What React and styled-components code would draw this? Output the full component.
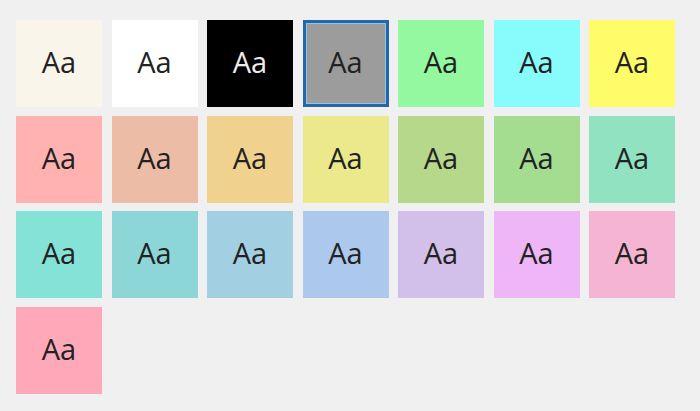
import React from 'react'
import styled, {createGlobalStyle} from 'styled-components'

const GlobalStyle = createGlobalStyle`
	html, body {
		margin: 0;
		padding: 0;
		background: #f0f0f0;
	}
	body {
		font-family: 'Open Sans', 'Noto Sans', sans-serif;
	}
`

const Palette = styled.div`
	display: grid;
	grid-template-columns: repeat(7, 86px);
	grid-auto-rows: 87px;
	column-gap: 9.5px;
	row-gap: 8.7px;
	padding: 20px 0 0 16px;
`

const Swatch = styled.button`
	display: flex;
	align-items: center;
	justify-content: center;
	box-sizing: border-box;
	margin: 0;
	padding: 0 0 4px 0;
	border: none;
	background: ${({color}) => color};
	color: ${({dark}) => (dark ? '#ececec' : '#222222')};
	font-family: 'Open Sans', 'Noto Sans', sans-serif;
	font-size: 29px;
	line-height: 1;
	cursor: pointer;
	${({selected}) =>
		selected &&
		`
		padding-bottom: 4px;
		border: 3px solid #2467a8;
		box-shadow: inset 0 0 0 1px #8fc3ea;
	`}
`

const colors = [
	'#faf5ea', '#ffffff', '#000000', '#9c9c9c', '#94f8a0', '#86fcfc', '#fefc68',
	'#ffb2b0', '#ecbca6', '#f0d28e', '#ece88c', '#b6d88a', '#a4dc90', '#90e2c0',
	'#84e2d6', '#8cd6d8', '#a2d0e2', '#acc8ec', '#d2c0ea', '#eeb6f6', '#f4b4d2',
	'#ffa8ba',
]

export default function App() {
	return (
		<>
			<GlobalStyle />
			<Palette>
				{colors.map((c, i) => (
					<Swatch key={i} color={c} dark={c === '#000000'} selected={i === 3}>
						Aa
					</Swatch>
				))}
			</Palette>
		</>
	)
}
